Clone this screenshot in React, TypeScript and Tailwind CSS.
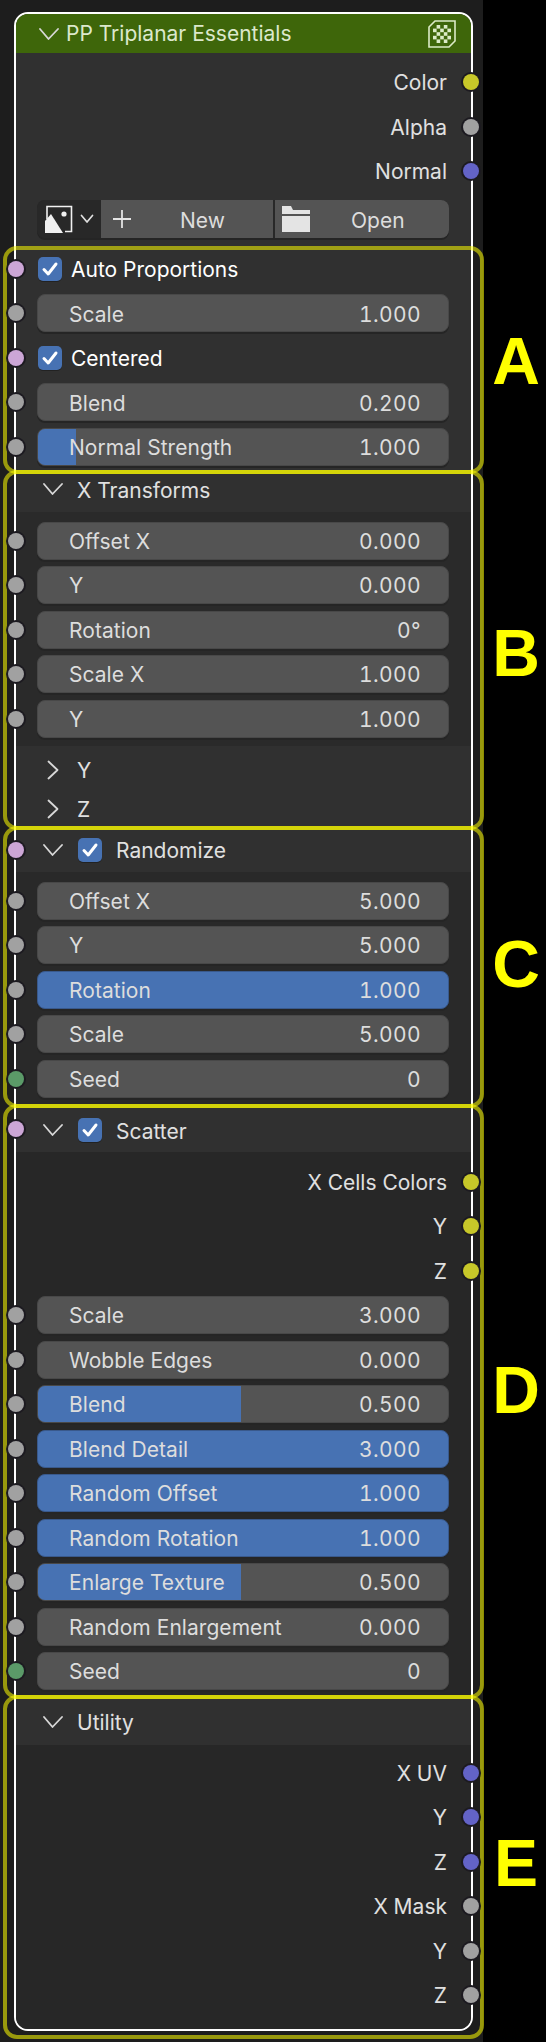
import React from "react";

const FONT = "font-['Inter','Noto_Sans',sans-serif]";
type SocketColor = "yellow" | "gray" | "blue" | "pink" | "green";

const socketClass: Record<SocketColor, string> = {
  yellow: "bg-[#c7c729]",
  gray: "bg-[#a1a1a1]",
  blue: "bg-[#6363c7]",
  pink: "bg-[#cca6d6]",
  green: "bg-[#5b9a68]",
};

function Socket({ color, side }: { color: SocketColor; side: "left" | "right" }) {
  return (
    <span
      className={`absolute top-1/2 -translate-y-1/2 z-30 w-4 h-4 rounded-full ring-2 ring-[#1c1a20] ${socketClass[color]} ${
        side === "left" ? "left-[-8px]" : "right-[-8px]"
      }`}
    />
  );
}

function Row({ children, socket, side = "left", className = "" }: { children?: React.ReactNode; socket?: SocketColor; side?: "left" | "right"; className?: string }) {
  return (
    <div className={`relative h-[44.5px] flex items-center ${className}`}>
      {socket && <Socket color={socket} side={side} />}
      {children}
    </div>
  );
}

function Output({ label, color }: { label: string; color: SocketColor }) {
  return (
    <Row socket={color} side="right" className="justify-end pr-[24px] pt-[1px] text-[#e0e0e0]">
      {label}
    </Row>
  );
}

function Field({ label, value, fill = 0, socket = "gray" }: { label: string; value: string; fill?: number; socket?: SocketColor }) {
  const full = fill >= 100;
  return (
    <Row socket={socket} className="pl-[21px] pr-[22px]">
      <div
        className={`relative h-[38px] w-full overflow-hidden rounded-[8px] border shadow-[0_2px_0_#252525] text-[#dddddd] ${
          full ? "bg-[#4772b3] border-[#39598c]" : "bg-[#545454] border-[#484848]"
        }`}
      >
        {fill > 0 && !full && <div className="absolute left-0 top-0 bottom-0 bg-[#4772b3]" style={{ width: `${fill}%` }} />}
        <div className="relative h-full flex items-center justify-between pt-[1.5px] pl-[31px] pr-[27px]">
          <span className="tracking-[0.05px]">{label}</span>
          <span className="tabular-nums tracking-[0.4px]">{value}</span>
        </div>
      </div>
    </Row>
  );
}

function Check() {
  return (
    <span className="flex items-center justify-center w-[24px] h-[24px] rounded-[5px] bg-[#4772b3] shadow-[0_1px_0_#222]">
      <svg width="18" height="18" viewBox="0 0 18 18" fill="none">
        <path d="M3 9.5 L7.2 14 L15 4" stroke="#fff" strokeWidth="3" strokeLinecap="round" strokeLinejoin="round" />
      </svg>
    </span>
  );
}

function CheckRow({ label }: { label: string }) {
  return (
    <Row socket="pink" className="pl-[22px] gap-[9px] text-white">
      <Check />
      <span className="pt-[2px]">{label}</span>
    </Row>
  );
}

function Chevron({ open = true }: { open?: boolean }) {
  return (
    <svg width="20" height="20" viewBox="0 0 20 20" fill="none" className="shrink-0">
      {open ? (
        <path d="M1 5 L9.5 15 L19 5" stroke="#d8d8d8" strokeWidth="1.8" strokeLinecap="round" strokeLinejoin="round" />
      ) : (
        <path d="M5.5 1.5 L14.5 10 L5.5 18.5" stroke="#d8d8d8" strokeWidth="1.8" strokeLinecap="round" strokeLinejoin="round" />
      )}
    </svg>
  );
}

function PanelHeader({ label, check, heightClass, open = true }: { label: string; check?: boolean; heightClass: string; open?: boolean }) {
  return (
    <div className={`relative flex items-center pl-[27px] bg-[#303030] text-[#e0e0e0] ${heightClass}`}>
      {check && <Socket color="pink" side="left" />}
      <Chevron open={open} />
      {check && (
        <span className="ml-[15px]">
          <Check />
        </span>
      )}
      <span className="ml-[14px] pt-[2px]">{label}</span>
    </div>
  );
}

function TextureIcon() {
  const cells = [
    [1, 0], [3, 0],
    [0, 1], [2, 1], [4, 1],
    [1, 2], [3, 2],
    [0, 3], [2, 3], [4, 3],
    [1, 4], [3, 4],
  ];
  return (
    <svg width="28" height="28" viewBox="0 0 28 28" fill="none">
      <path d="M7 1 H27 V21 L21 27 H1 V7 Z" stroke="#dcebc8" strokeWidth="1.6" />
      {cells.map(([x, y]) => (
        <rect key={`${x}-${y}`} x={5 + x * 3.6} y={5 + y * 3.6} width="3.6" height="3.6" fill="#dcebc8" />
      ))}
    </svg>
  );
}

function ImageIcon() {
  return (
    <svg width="28" height="28" viewBox="0 0 28 28" fill="none">
      <path d="M2 14 V1.5 H26.5 V26.5 H20" stroke="#f0f0f0" strokeWidth="1.6" />
      <path d="M0 28 V16 L6 9 L18 28 Z" fill="#f0f0f0" />
      <circle cx="19" cy="9" r="2.6" fill="#f0f0f0" />
    </svg>
  );
}

function ImageButtons() {
  return (
    <div className="h-[44.5px] pl-[21px] pr-[22px] flex items-center">
      <div className="flex w-full h-[38px] rounded-[8px] overflow-hidden text-[#dddddd] bg-[#282828] shadow-[0_2px_0_#252525]">
        <div className="w-[62px] flex items-center pl-[8px] gap-[7px] bg-[#282828]">
          <ImageIcon />
          <svg width="14" height="10" viewBox="0 0 14 10" fill="none">
            <path d="M1.5 1.5 L7 8 L12.5 1.5" stroke="#e0e0e0" strokeWidth="1.7" strokeLinecap="round" strokeLinejoin="round" />
          </svg>
        </div>
        <div className="ml-[2px] w-[172px] flex items-center bg-[#545454] pl-[11px]">
          <svg width="20" height="20" viewBox="0 0 20 20" fill="none">
            <path d="M10 1 V19 M1 10 H19" stroke="#e4e4e4" strokeWidth="1.8" />
          </svg>
          <span className="ml-[48px] pt-[2px]">New</span>
        </div>
        <div className="ml-[2px] flex-1 flex items-center bg-[#545454] pl-[7px]">
          <svg width="28" height="26" viewBox="0 0 28 26" fill="none">
            <path d="M0 0 H9 L11 4 H28 V8 H0 Z M0 10 H28 V26 H0 Z" fill="#e4e4e4" />
          </svg>
          <span className="ml-[41px] pt-[2px]">Open</span>
        </div>
      </div>
    </div>
  );
}

function Annotation({ boxClass, letter, letterClass }: { boxClass: string; letter: string; letterClass: string }) {
  return (
    <>
      <div className={`absolute left-[3px] w-[481px] border-4 border-[#ffff00]/55 rounded-[14px] z-20 pointer-events-none ${boxClass}`} />
      <span className={`absolute left-[485px] w-[62px] text-center text-[#ffff00] text-[66px] leading-[66px] font-bold font-['Liberation_Sans',sans-serif] ${letterClass}`}>
        {letter}
      </span>
    </>
  );
}

export default function App() {
  return (
    <div className={`relative w-[546px] h-[2042px] overflow-hidden bg-black ${FONT} text-[21px] leading-none`}>
      <div className="w-[483px] h-[2042px] bg-[#1d1d1d] pt-[12px] pl-[14px]">
        <div className="w-[459px] h-[2019px] border-2 border-white rounded-[14px] flex flex-col bg-[#272727]">
          <div className="h-[39px] shrink-0 bg-[#3e660a] rounded-t-[12px] flex items-center pl-[23px] pr-[15px] text-[#dce8cc]">
            <Chevron />
            <span className="ml-[7px] flex-1">PP Triplanar Essentials</span>
            <TextureIcon />
          </div>

          <div className="bg-[#303030] pt-[7px]">
            <Output label="Color" color="yellow" />
            <Output label="Alpha" color="gray" />
            <Output label="Normal" color="blue" />
            <div className="pt-[3.5px]">
              <ImageButtons />
            </div>
            <div className="pt-[5px]">
              <CheckRow label="Auto Proportions" />
              <Field label="Scale" value="1.000" />
              <CheckRow label="Centered" />
              <Field label="Blend" value="0.200" />
              <Field label="Normal Strength" value="1.000" fill={9.3} />
            </div>
          </div>

          <PanelHeader label="X Transforms" heightClass="h-[42.5px] pb-[2px]" />
          <div className="bg-[#2a2a2a] pt-[6.75px] pb-[5.5px]">
            <Field label="Offset X" value="0.000" />
            <Field label="Y" value="0.000" />
            <Field label="Rotation" value="0°" />
            <Field label="Scale X" value="1.000" />
            <Field label="Y" value="1.000" />
          </div>
          <div className="bg-[#303030] pt-[4px]">
            <PanelHeader label="Y" heightClass="h-[39px]" open={false} />
            <PanelHeader label="Z" heightClass="h-[39px]" open={false} />
          </div>

          <PanelHeader label="Randomize" check heightClass="h-[43.25px]" />
          <div className="bg-[#292929] pt-[6.75px] pb-[5px]">
            <Field label="Offset X" value="5.000" />
            <Field label="Y" value="5.000" />
            <Field label="Rotation" value="1.000" fill={100} />
            <Field label="Scale" value="5.000" />
            <Field label="Seed" value="0" socket="green" />
          </div>

          <PanelHeader label="Scatter" check heightClass="h-[46px] pt-[3px]" />
          <div className="bg-[#272727] pt-[7.5px] pb-[3.5px]">
            <Output label="X Cells Colors" color="yellow" />
            <Output label="Y" color="yellow" />
            <Output label="Z" color="yellow" />
            <Field label="Scale" value="3.000" />
            <Field label="Wobble Edges" value="0.000" />
            <Field label="Blend" value="0.500" fill={49.6} />
            <Field label="Blend Detail" value="3.000" fill={100} />
            <Field label="Random Offset" value="1.000" fill={100} />
            <Field label="Random Rotation" value="1.000" fill={100} />
            <Field label="Enlarge Texture" value="0.500" fill={49.6} />
            <Field label="Random Enlargement" value="0.000" />
            <Field label="Seed" value="0" socket="green" />
          </div>

          <PanelHeader label="Utility" heightClass="h-[48px] pt-[1.5px]" />
          <div className="flex-1 bg-[#272727] pt-[5.5px] rounded-b-[12px]">
            <Output label="X UV" color="blue" />
            <Output label="Y" color="blue" />
            <Output label="Z" color="blue" />
            <Output label="X Mask" color="gray" />
            <Output label="Y" color="gray" />
            <Output label="Z" color="gray" />
          </div>
        </div>
      </div>

      <Annotation boxClass="top-[246px] h-[228px]" letter="A" letterClass="top-[328px]" />
      <Annotation boxClass="top-[470px] h-[360px]" letter="B" letterClass="top-[620px]" />
      <Annotation boxClass="top-[826px] h-[282px]" letter="C" letterClass="top-[931px]" />
      <Annotation boxClass="top-[1104px] h-[595px]" letter="D" letterClass="top-[1357px]" />
      <Annotation boxClass="top-[1695px] h-[344px]" letter="E" letterClass="top-[1830px]" />
    </div>
  );
}
